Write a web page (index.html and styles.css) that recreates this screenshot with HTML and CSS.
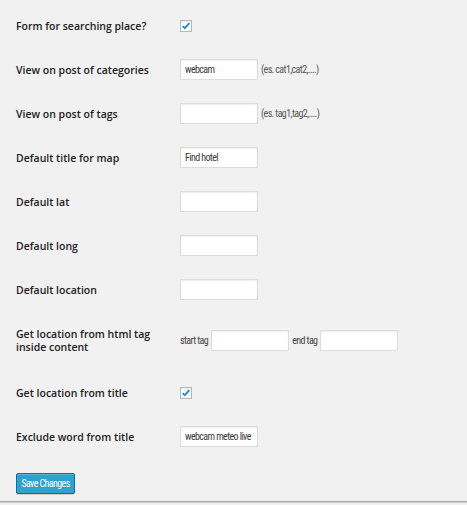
FILE: index.html
```html
<!DOCTYPE html>
<html>
<head>
<meta charset="utf-8">
<link rel="stylesheet" href="styles.css">
</head>
<body>
<div class="page">
  <form class="settings">
    <div class="row">
      <div class="label">Form for searching place?</div>
      <div class="field"><span class="check"><svg viewBox="0 0 12 12" width="10" height="10"><path d="M2 6.2 L4.6 8.6 L10 2.6" fill="none" stroke="#1e8cbe" stroke-width="2.2"/></svg></span></div>
    </div>
    <div class="row">
      <div class="label">View on post of categories</div>
      <div class="field"><span class="input">webcam</span><span class="hint">(es. cat1,cat2,....)</span></div>
    </div>
    <div class="row">
      <div class="label">View on post of tags</div>
      <div class="field"><span class="input"></span><span class="hint">(es. tag1,tag2,....)</span></div>
    </div>
    <div class="row">
      <div class="label">Default title for map</div>
      <div class="field"><span class="input">Find hotel</span></div>
    </div>
    <div class="row">
      <div class="label">Default lat</div>
      <div class="field"><span class="input"></span></div>
    </div>
    <div class="row">
      <div class="label">Default long</div>
      <div class="field"><span class="input"></span></div>
    </div>
    <div class="row">
      <div class="label">Default location</div>
      <div class="field"><span class="input"></span></div>
    </div>
    <div class="row tall">
      <div class="label">Get location from html tag<br>inside content</div>
      <div class="field"><span class="small">start tag</span><span class="input"></span><span class="small">end tag</span><span class="input"></span></div>
    </div>
    <div class="row">
      <div class="label">Get location from title</div>
      <div class="field"><span class="check"><svg viewBox="0 0 12 12" width="10" height="10"><path d="M2 6.2 L4.6 8.6 L10 2.6" fill="none" stroke="#1e8cbe" stroke-width="2.2"/></svg></span></div>
    </div>
    <div class="row">
      <div class="label">Exclude word from title</div>
      <div class="field"><span class="input">webcam meteo live</span></div>
    </div>
    <div class="submit"><span class="button">Save Changes</span></div>
  </form>
  <div class="footer"></div>
</div>
</body>
</html>
```
FILE: styles.css
```css
html, body {
  margin: 0;
  padding: 0;
  background: #f1f1f1;
}
.page {
  width: 467px;
  height: 505px;
  overflow: hidden;
}
.settings {
  padding: 4px 0 0 16px;
}
.row {
  display: flex;
  align-items: flex-start;
}
.label {
  width: 164px;
  flex: none;
  padding-top: 16px;
  font-family: "Open Sans", sans-serif;
  font-weight: 600;
  font-size: 10.5px;
  line-height: 12.5px;
  color: #222;
}
.field {
  display: flex;
  align-items: center;
  min-height: 21px;
  padding: 11px 0 12px;
  font-family: "Roboto Condensed", "Open Sans", sans-serif;
  font-stretch: 75%;
  font-size: 10px;
  letter-spacing: -0.6px;
}
.row.tall .field {
  padding: 18px 0 20px;
}
.input {
  box-sizing: border-box;
  width: 78px;
  height: 21px;
  background: #fff;
  border: 1px solid #ddd;
  box-shadow: inset 0 1px 2px rgba(0,0,0,0.07);
  padding: 0 3px 0 4px;
  line-height: 19px;
  color: #3a3a3a;
  white-space: nowrap;
  overflow: hidden;
}
.hint {
  margin-left: 3px;
  color: #555;
}
.small {
  color: #444;
  margin-right: 3px;
}
.input + .small {
  margin-left: 3px;
}
.check {
  box-sizing: border-box;
  width: 12px;
  height: 12px;
  border: 1px solid #b4b9be;
  background: #fff;
  box-shadow: inset 0 1px 2px rgba(0,0,0,0.1);
  display: flex;
  align-items: center;
  justify-content: center;
}
.submit {
  padding-top: 14px;
}
.button {
  display: inline-block;
  box-sizing: border-box;
  height: 21px;
  width: 59px;
  background: #2ea2cc;
  border: 1px solid #0074a2;
  border-radius: 2px;
  box-shadow: inset 0 1px 0 rgba(120,200,230,0.5), 0 1px 0 rgba(0,0,0,0.15);
  color: #fff;
  text-align: center;
  white-space: nowrap;
  font-family: "Roboto Condensed", "Open Sans", sans-serif;
  font-stretch: 75%;
  font-size: 10px;
  letter-spacing: -0.6px;
  line-height: 19px;
}
.footer {
  margin-top: 7px;
  border-top: 1px solid #a8a8a8;
  border-bottom: 1px solid #cfcfcf;
  height: 0;
}
```
